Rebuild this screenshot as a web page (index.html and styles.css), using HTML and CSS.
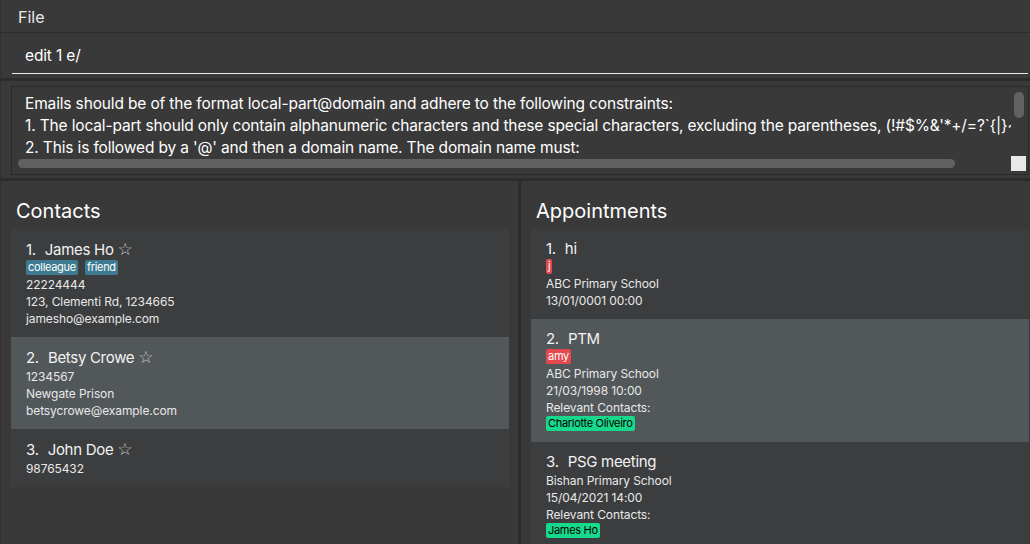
FILE: index.html
```html
<!DOCTYPE html>
<html>
<head>
<meta charset="utf-8">
<link rel="stylesheet" href="styles.css">
</head>
<body>
<div class="app">
  <div class="menubar"><span class="menu-item">File</span></div>
  <div class="command">
    <div class="command-field">edit 1 e/</div>
  </div>
  <div class="sep"></div>
  <div class="result">
    <div class="result-box">
      <div class="result-text">
        <div class="rline">Emails should be of the format local-part@domain and adhere to the following constraints:</div>
        <div class="rline">1. The local-part should only contain alphanumeric characters and these special characters, excluding the parentheses, (!#$%&amp;'*+/=?`{|}~^.-) .</div>
        <div class="rline">2. This is followed by a '@' and then a domain name. The domain name must:</div>
      </div>
      <div class="vscroll"><div class="vthumb"></div></div>
      <div class="hscroll"><div class="hthumb"></div></div>
      <div class="corner"></div>
    </div>
  </div>
  <div class="sep"></div>
  <div class="panels">
    <div class="panel panel-left">
      <div class="panel-title">Contacts</div>
      <div class="list">
        <div class="card">
          <div class="name-row"><span class="idx">1.</span><span class="name">James Ho</span><span class="star">☆</span></div>
          <div class="tags"><span class="tag tag-blue">colleague</span><span class="tag tag-blue">friend</span></div>
          <div class="detail">22224444</div>
          <div class="detail">123, Clementi Rd, 1234665</div>
          <div class="detail">jamesho@example.com</div>
        </div>
        <div class="card selected">
          <div class="name-row"><span class="idx">2.</span><span class="name">Betsy Crowe</span><span class="star">☆</span></div>
          <div class="detail">1234567</div>
          <div class="detail">Newgate Prison</div>
          <div class="detail">betsycrowe@example.com</div>
        </div>
        <div class="card">
          <div class="name-row"><span class="idx">3.</span><span class="name">John Doe</span><span class="star">☆</span></div>
          <div class="detail">98765432</div>
        </div>
      </div>
    </div>
    <div class="divider"></div>
    <div class="panel panel-right">
      <div class="panel-title">Appointments</div>
      <div class="list">
        <div class="card">
          <div class="name-row"><span class="idx">1.</span><span class="name">hi</span></div>
          <div class="tags"><span class="tag tag-red">j</span></div>
          <div class="detail">ABC Primary School</div>
          <div class="detail">13/01/0001 00:00</div>
        </div>
        <div class="card selected">
          <div class="name-row"><span class="idx">2.</span><span class="name">PTM</span></div>
          <div class="tags"><span class="tag tag-red">amy</span></div>
          <div class="detail">ABC Primary School</div>
          <div class="detail">21/03/1998 10:00</div>
          <div class="detail">Relevant Contacts:</div>
          <div class="tags tags-contacts"><span class="tag tag-green">Charlotte Oliveiro</span></div>
        </div>
        <div class="card">
          <div class="name-row"><span class="idx">3.</span><span class="name">PSG meeting</span></div>
          <div class="detail">Bishan Primary School</div>
          <div class="detail">15/04/2021 14:00</div>
          <div class="detail">Relevant Contacts:</div>
          <div class="tags tags-contacts"><span class="tag tag-green">James Ho</span></div>
        </div>
      </div>
    </div>
  </div>
</div>
</body>
</html>
```
FILE: styles.css
```css
html, body {
  margin: 0;
  padding: 0;
}
body {
  background: #393939;
  font-family: "Inter", "Open Sans", sans-serif;
  color: #ffffff;
  width: 1030px;
  height: 544px;
  overflow: hidden;
}
.app {
  display: flex;
  flex-direction: column;
  height: 544px;
  border-left: 1px solid #303030;
  box-sizing: border-box;
}
.menubar {
  height: 33px;
  border-bottom: 1px solid #2c2c2c;
  padding: 7px 0 0 17px;
  box-sizing: border-box;
  flex: none;
}
.menu-item {
  font-size: 16px;
  line-height: 20px;
  color: #e8e8e8;
}
.command {
  height: 45px;
  padding: 13px 2px 0 11px;
  box-sizing: border-box;
  flex: none;
}
.command-field {
  font-size: 15.5px;
  letter-spacing: -0.15px;
  line-height: 20px;
  padding: 0 0 7px 13px;
  border-bottom: 1px solid #e6e6e6;
  color: #ffffff;
}
.sep {
  height: 3px;
  background: #2c2c2c;
  flex: none;
}
.result {
  height: 97px;
  padding: 5px 1px 0 10px;
  box-sizing: border-box;
  flex: none;
}
.result-box {
  border: 1px solid #2a2a2a;
  height: 89px;
  box-sizing: border-box;
  display: grid;
  grid-template-columns: 1fr 16px;
  grid-template-rows: 69px 15px;
  padding: 0 1px 3px 0;
}
.result-text {
  overflow: hidden;
  padding: 6px 0 0 13px;
  font-size: 15.5px;
  letter-spacing: -0.15px;
  line-height: 22px;
  white-space: nowrap;
  height: 72px;
  box-sizing: border-box;
}
.vscroll {
  padding: 5px 0 0 3px;
}
.vthumb {
  width: 10px;
  height: 26px;
  border-radius: 5px;
  background: #626262;
}
.hscroll {
  padding: 3px 0 0 6px;
}
.hthumb {
  width: 937px;
  height: 9px;
  border-radius: 5px;
  background: #616161;
}
.corner {
  width: 15px;
  height: 15px;
  background: #e8e8e8;
}
.panels {
  flex: 1;
  display: flex;
  min-height: 0;
}
.panel {
  display: flex;
  flex-direction: column;
  padding-top: 18px;
  box-sizing: border-box;
}
.panel-left {
  width: 517px;
  padding-left: 10px;
  padding-right: 9px;
}
.divider {
  width: 3px;
  background: #2c2c2c;
  flex: none;
}
.panel-right {
  flex: 1;
  padding-left: 10px;
  padding-right: 1px;
}
.panel-title {
  font-size: 20px;
  line-height: 24px;
  padding-left: 5px;
  margin-bottom: 6px;
  color: #ffffff;
}
.list {
  display: flex;
  flex-direction: column;
}
.card {
  background: #3c3d3f;
  padding: 10px 15px 10px;
}
.card.selected {
  background: #52575a;
}
.name-row {
  font-size: 15px;
  letter-spacing: -0.3px;
  line-height: 20px;
  color: #f2f2f2;
  display: flex;
  align-items: baseline;
}
.idx {
  margin-right: 9px;
}
.star {
  font-family: "DejaVu Sans", sans-serif;
  font-size: 17px;
  letter-spacing: 0;
  color: #c8c8c8;
  margin-left: 4px;
}
.tags {
  display: flex;
  gap: 7px;
  height: 16px;
}
.tag {
  font-size: 11px;
  letter-spacing: -0.3px;
  line-height: 15px;
  height: 15px;
  padding: 0 2px;
  border-radius: 2px;
  color: #ffffff;
}
.tag-blue {
  background: #3e7b91;
}
.tag-red {
  background: #e5484d;
}
.tag-green {
  background: #17d98c;
  color: #000000;
}
.detail {
  font-size: 12px;
  letter-spacing: -0.1px;
  line-height: 17px;
  color: #e8e8e8;
}
```
